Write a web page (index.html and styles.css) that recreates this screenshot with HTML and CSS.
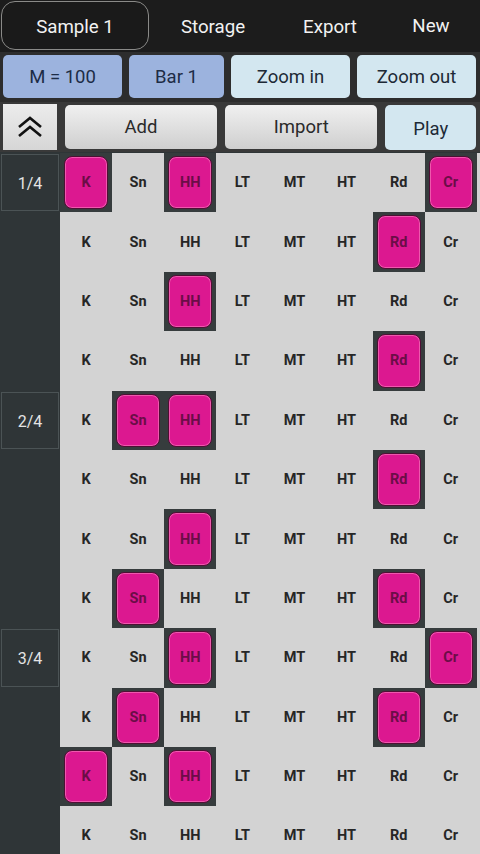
FILE: index.html
```html
<!DOCTYPE html>
<html>
<head>
<meta charset="utf-8">
<link rel="stylesheet" href="styles.css">
</head>
<body>
<div class="app">
  <nav class="tabs">
    <div class="tab t1 active">Sample 1</div>
    <div class="tab t2">Storage</div>
    <div class="tab t3">Export</div>
    <div class="tab t4 up">New</div>
  </nav>
  <div class="bar bar2">
    <button class="btn blue w1">M = 100</button>
    <button class="btn blue w2">Bar 1</button>
    <button class="btn light w3">Zoom in</button>
    <button class="btn light w3">Zoom out</button>
  </div>
  <div class="bar bar3">
    <button class="btn sq"><svg width="28" height="24" viewBox="0 0 28 24"><path d="M3 12 L14 3 L25 12 M3 21 L14 12 L25 21" fill="none" stroke="#111" stroke-width="2.6" stroke-linejoin="miter"/></svg></button>
    <button class="btn grey w4">Add</button>
    <button class="btn grey w4">Import</button>
    <button class="btn light w5">Play</button>
  </div>
  <div class="grid">
    <div class="lab"><span>1/4</span></div>
    <div class="c on"><span>K</span></div><div class="c">Sn</div><div class="c on"><span>HH</span></div><div class="c">LT</div><div class="c">MT</div><div class="c">HT</div><div class="c">Rd</div><div class="c on"><span>Cr</span></div>
    <div class="lab empty"></div>
    <div class="c">K</div><div class="c">Sn</div><div class="c">HH</div><div class="c">LT</div><div class="c">MT</div><div class="c">HT</div><div class="c on"><span>Rd</span></div><div class="c">Cr</div>
    <div class="lab empty"></div>
    <div class="c">K</div><div class="c">Sn</div><div class="c on"><span>HH</span></div><div class="c">LT</div><div class="c">MT</div><div class="c">HT</div><div class="c">Rd</div><div class="c">Cr</div>
    <div class="lab empty"></div>
    <div class="c">K</div><div class="c">Sn</div><div class="c">HH</div><div class="c">LT</div><div class="c">MT</div><div class="c">HT</div><div class="c on"><span>Rd</span></div><div class="c">Cr</div>

    <div class="lab"><span>2/4</span></div>
    <div class="c">K</div><div class="c on"><span>Sn</span></div><div class="c on"><span>HH</span></div><div class="c">LT</div><div class="c">MT</div><div class="c">HT</div><div class="c">Rd</div><div class="c">Cr</div>
    <div class="lab empty"></div>
    <div class="c">K</div><div class="c">Sn</div><div class="c">HH</div><div class="c">LT</div><div class="c">MT</div><div class="c">HT</div><div class="c on"><span>Rd</span></div><div class="c">Cr</div>
    <div class="lab empty"></div>
    <div class="c">K</div><div class="c">Sn</div><div class="c on"><span>HH</span></div><div class="c">LT</div><div class="c">MT</div><div class="c">HT</div><div class="c">Rd</div><div class="c">Cr</div>
    <div class="lab empty"></div>
    <div class="c">K</div><div class="c on"><span>Sn</span></div><div class="c">HH</div><div class="c">LT</div><div class="c">MT</div><div class="c">HT</div><div class="c on"><span>Rd</span></div><div class="c">Cr</div>

    <div class="lab"><span>3/4</span></div>
    <div class="c">K</div><div class="c">Sn</div><div class="c on"><span>HH</span></div><div class="c">LT</div><div class="c">MT</div><div class="c">HT</div><div class="c">Rd</div><div class="c on"><span>Cr</span></div>
    <div class="lab empty"></div>
    <div class="c">K</div><div class="c on"><span>Sn</span></div><div class="c">HH</div><div class="c">LT</div><div class="c">MT</div><div class="c">HT</div><div class="c on"><span>Rd</span></div><div class="c">Cr</div>
    <div class="lab empty"></div>
    <div class="c on"><span>K</span></div><div class="c">Sn</div><div class="c on"><span>HH</span></div><div class="c">LT</div><div class="c">MT</div><div class="c">HT</div><div class="c">Rd</div><div class="c">Cr</div>
    <div class="lab empty"></div>
    <div class="c">K</div><div class="c">Sn</div><div class="c">HH</div><div class="c">LT</div><div class="c">MT</div><div class="c">HT</div><div class="c">Rd</div><div class="c">Cr</div>
  </div>
</div>
</body>
</html>
```
FILE: styles.css
```css
html, body {
  margin: 0;
  padding: 0;
  background: #2f3537;
  overflow: hidden;
}
body {
  font-family: Roboto, "Noto Sans", sans-serif;
  width: 480px;
  height: 854px;
}
.app {
  display: flex;
  flex-direction: column;
}
.tabs {
  display: flex;
  height: 52px;
  background: #1c1c1c;
  box-sizing: border-box;
  padding: 1px 0 2px 1px;
}
.tab {
  color: #f2f2f2;
  font-size: 18.7px;
  display: flex;
  align-items: center;
  justify-content: center;
  box-sizing: border-box;
  padding-top: 3px;
}
.tab.up { padding-top: 0; }
.t1 { width: 148px; }
.t2 { width: 128px; }
.t3 { width: 106px; }
.t4 { width: 96px; }
.tab.active {
  border: 1.5px solid #8a8a88;
  border-radius: 14px;
  background: #1a1a1a;
  padding-top: 2px;
}
.bar {
  display: flex;
  box-sizing: border-box;
}
.bar2 {
  height: 50px;
  background: #2d2d2d;
  padding: 3px 4px 4px 3px;
  gap: 7px;
}
.bar3 {
  height: 50px;
  background: #393939;
  padding: 2px 4px 2px 3px;
  gap: 7px;
}
.btn {
  border: none;
  margin: 0;
  padding: 0;
  font-family: Roboto, "Noto Sans", sans-serif;
  font-size: 18.5px;
  color: #1e2530;
  display: flex;
  align-items: center;
  justify-content: center;
  border-radius: 5px;
}
.blue { background: #9cb3de; color: #1d2c46; }
.light { background: #d3e7f0; color: #1d2a36; }
.grey {
  background: linear-gradient(#f0f0f0, #cfcfcf);
  color: #2a2a2a;
}
.w1 { width: 119px; }
.w2 { width: 95px; }
.w3 { width: 119px; }
.w4 { width: 153px; margin-top: 1px; height: 44px; margin-left: 1px; }
.w5 { width: 91px; margin-left: 1px; height: 45px; margin-top: 1px; padding-top: 3px; }
.sq {
  width: 54px;
  height: 46px;
  border-radius: 0;
  background: linear-gradient(#ececec, #d6d6d6);
}
.grid {
  display: grid;
  grid-template-columns: 60px repeat(8, 52.1px);
  grid-auto-rows: 59.4px;
  background: #d3d3d3;
  margin-top: 1px;
}
.lab {
  background: #2f3537;
  display: flex;
  padding: 1px;
}
.lab span {
  flex: 1;
  border: 1px solid #4b5355;
  display: flex;
  align-items: center;
  justify-content: center;
  color: #e4e4e4;
  font-size: 16px;
  padding-top: 2px;
}
.c {
  display: flex;
  align-items: center;
  justify-content: center;
  font-size: 14.5px;
  font-weight: bold;
  color: #262626;
}
.c.on {
  background: #363c3d;
  padding: 3px 4px;
  align-items: stretch;
  justify-content: stretch;
}
.c.on span {
  flex: 1;
  display: flex;
  align-items: center;
  justify-content: center;
  background: #dc1890;
  border: 1.5px solid #4e0f34;
  box-shadow: inset 0 0 0 1px #ee58ad;
  border-radius: 8px;
  color: #6b0d47;
}
```
